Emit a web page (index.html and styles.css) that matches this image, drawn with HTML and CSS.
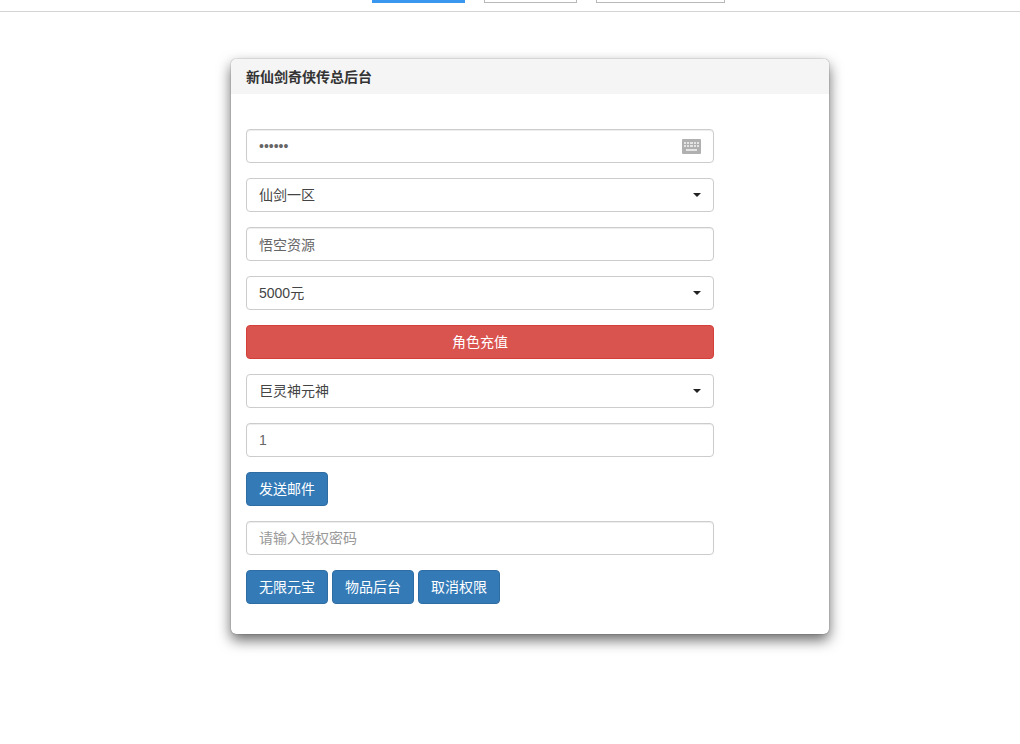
FILE: index.html
```html
<!DOCTYPE html>
<html lang="zh-CN">
<head>
    <meta charset="utf-8" />
    <title>新仙剑奇侠传总后台</title>
    <link rel="stylesheet" href="styles.css">
</head>
<body>

    <!-- Top bar, tabs are cut off by the window edge -->
    <div class="topbar">
        <div class="tab tab-active"></div>
        <div class="tab tab-two"></div>
        <div class="tab tab-three"></div>
    </div>

    <div class="panel">
        <div class="panel-heading">新仙剑奇侠传总后台</div>
        <div class="panel-body">
            <div class="form-group has-icon">
                <input class="form-control" type="password" value="123456">
                <svg class="keyboard" width="19" height="15" viewBox="0 0 19 15">
                    <rect width="19" height="15" rx="1" fill="#b0b0b0"/>
                    <path d="M2 3h2v2H2zM5 3h2v2H5zM8 3h3v2H8zM12 3h2v2h-2zM15 3h2v2h-2zM2 6h2v2H2zM5 6h2v2H5zM8 6h3v2H8zM12 6h2v2h-2zM15 6h2v2h-2zM4 10h11v2H4z" fill="#e4e4e4"/>
                </svg>
            </div>
            <div class="form-group">
                <button class="form-control select" type="button"><span>仙剑一区</span><span class="caret"></span></button>
            </div>
            <div class="form-group">
                <input class="form-control" type="text" value="悟空资源">
            </div>
            <div class="form-group">
                <button class="form-control select" type="button"><span>5000元</span><span class="caret"></span></button>
            </div>
            <div class="form-group">
                <button class="btn btn-danger" type="button">角色充值</button>
            </div>
            <div class="form-group">
                <button class="form-control select" type="button"><span>巨灵神元神</span><span class="caret"></span></button>
            </div>
            <div class="form-group">
                <input class="form-control" type="text" value="1">
            </div>
            <div class="form-group">
                <button class="btn btn-primary" type="button">发送邮件</button>
            </div>
            <div class="form-group">
                <input class="form-control" type="text" placeholder="请输入授权密码">
            </div>
            <div class="btn-row">
                <button class="btn btn-primary" type="button">无限元宝</button>
                <button class="btn btn-primary" type="button">物品后台</button>
                <button class="btn btn-primary" type="button">取消权限</button>
            </div>
        </div>
    </div>

</body>
</html>
```

FILE: styles.css
```css
* {
    box-sizing: border-box;
}

html,
body {
    height: 100%;
}

body {
    margin: 0;
    background: #fff;
    color: #333;
    font-family: "Liberation Sans", "Noto Sans CJK SC", sans-serif;
    font-size: 14px;
    line-height: 20px;
}

/* Top bar */
.topbar {
    height: 12px;
    padding: 0 0 8px 372px;
    display: flex;
    align-items: flex-end;
    border-bottom: 1px solid #d4d4d4;
}

.tab {
    height: 30px;
    width: 93px;
    margin-right: 19px;
    background: #fff;
    border: 1px solid #b8b8b8;
}

.tab-active {
    background: #3a97f0;
    border-color: #3a97f0;
}

.tab-three {
    width: 129px;
}

/* Panel */
.panel {
    width: 598px;
    margin: 47px 0 0 231px;
    background: #fff;
    border-radius: 5px;
    box-shadow: 0 0 1px rgba(0, 0, 0, 0.7), 0 6px 14px rgba(0, 0, 0, 0.6);
}

.panel-heading {
    height: 35px;
    padding: 8px 15px 7px;
    background: #f5f5f5;
    border-radius: 5px 5px 0 0;
    font-weight: bold;
}

.panel-body {
    width: 498px;
    padding: 35px 15px 30px;
}

.form-group {
    position: relative;
    margin-bottom: 15px;
}

/* Inputs and select-like buttons */
.form-control {
    display: block;
    width: 100%;
    height: 34px;
    padding: 6px 12px;
    background: #fff;
    color: #666;
    border: 1px solid #ccc;
    border-radius: 4px;
    box-shadow: inset 0 1px 1px rgba(0, 0, 0, 0.075);
    font: inherit;
    outline: none;
}

.form-control::placeholder {
    color: #999;
}

.select {
    display: flex;
    justify-content: space-between;
    align-items: center;
    box-shadow: none;
    color: #444;
    text-align: left;
}

.caret {
    width: 0;
    height: 0;
    border-top: 4px solid #222;
    border-left: 4px solid transparent;
    border-right: 4px solid transparent;
}

.keyboard {
    position: absolute;
    top: 10px;
    right: 13px;
}

/* Buttons */
.btn {
    height: 34px;
    padding: 6px 12px;
    border: 1px solid transparent;
    border-radius: 4px;
    color: #fff;
    font: inherit;
}

.btn-primary {
    background: #337ab7;
    border-color: #2e6da4;
}

.btn-danger {
    display: block;
    width: 100%;
    background: #d9534f;
    border-color: #d43f3a;
}

.btn-row {
    display: flex;
    gap: 4px;
}
```
